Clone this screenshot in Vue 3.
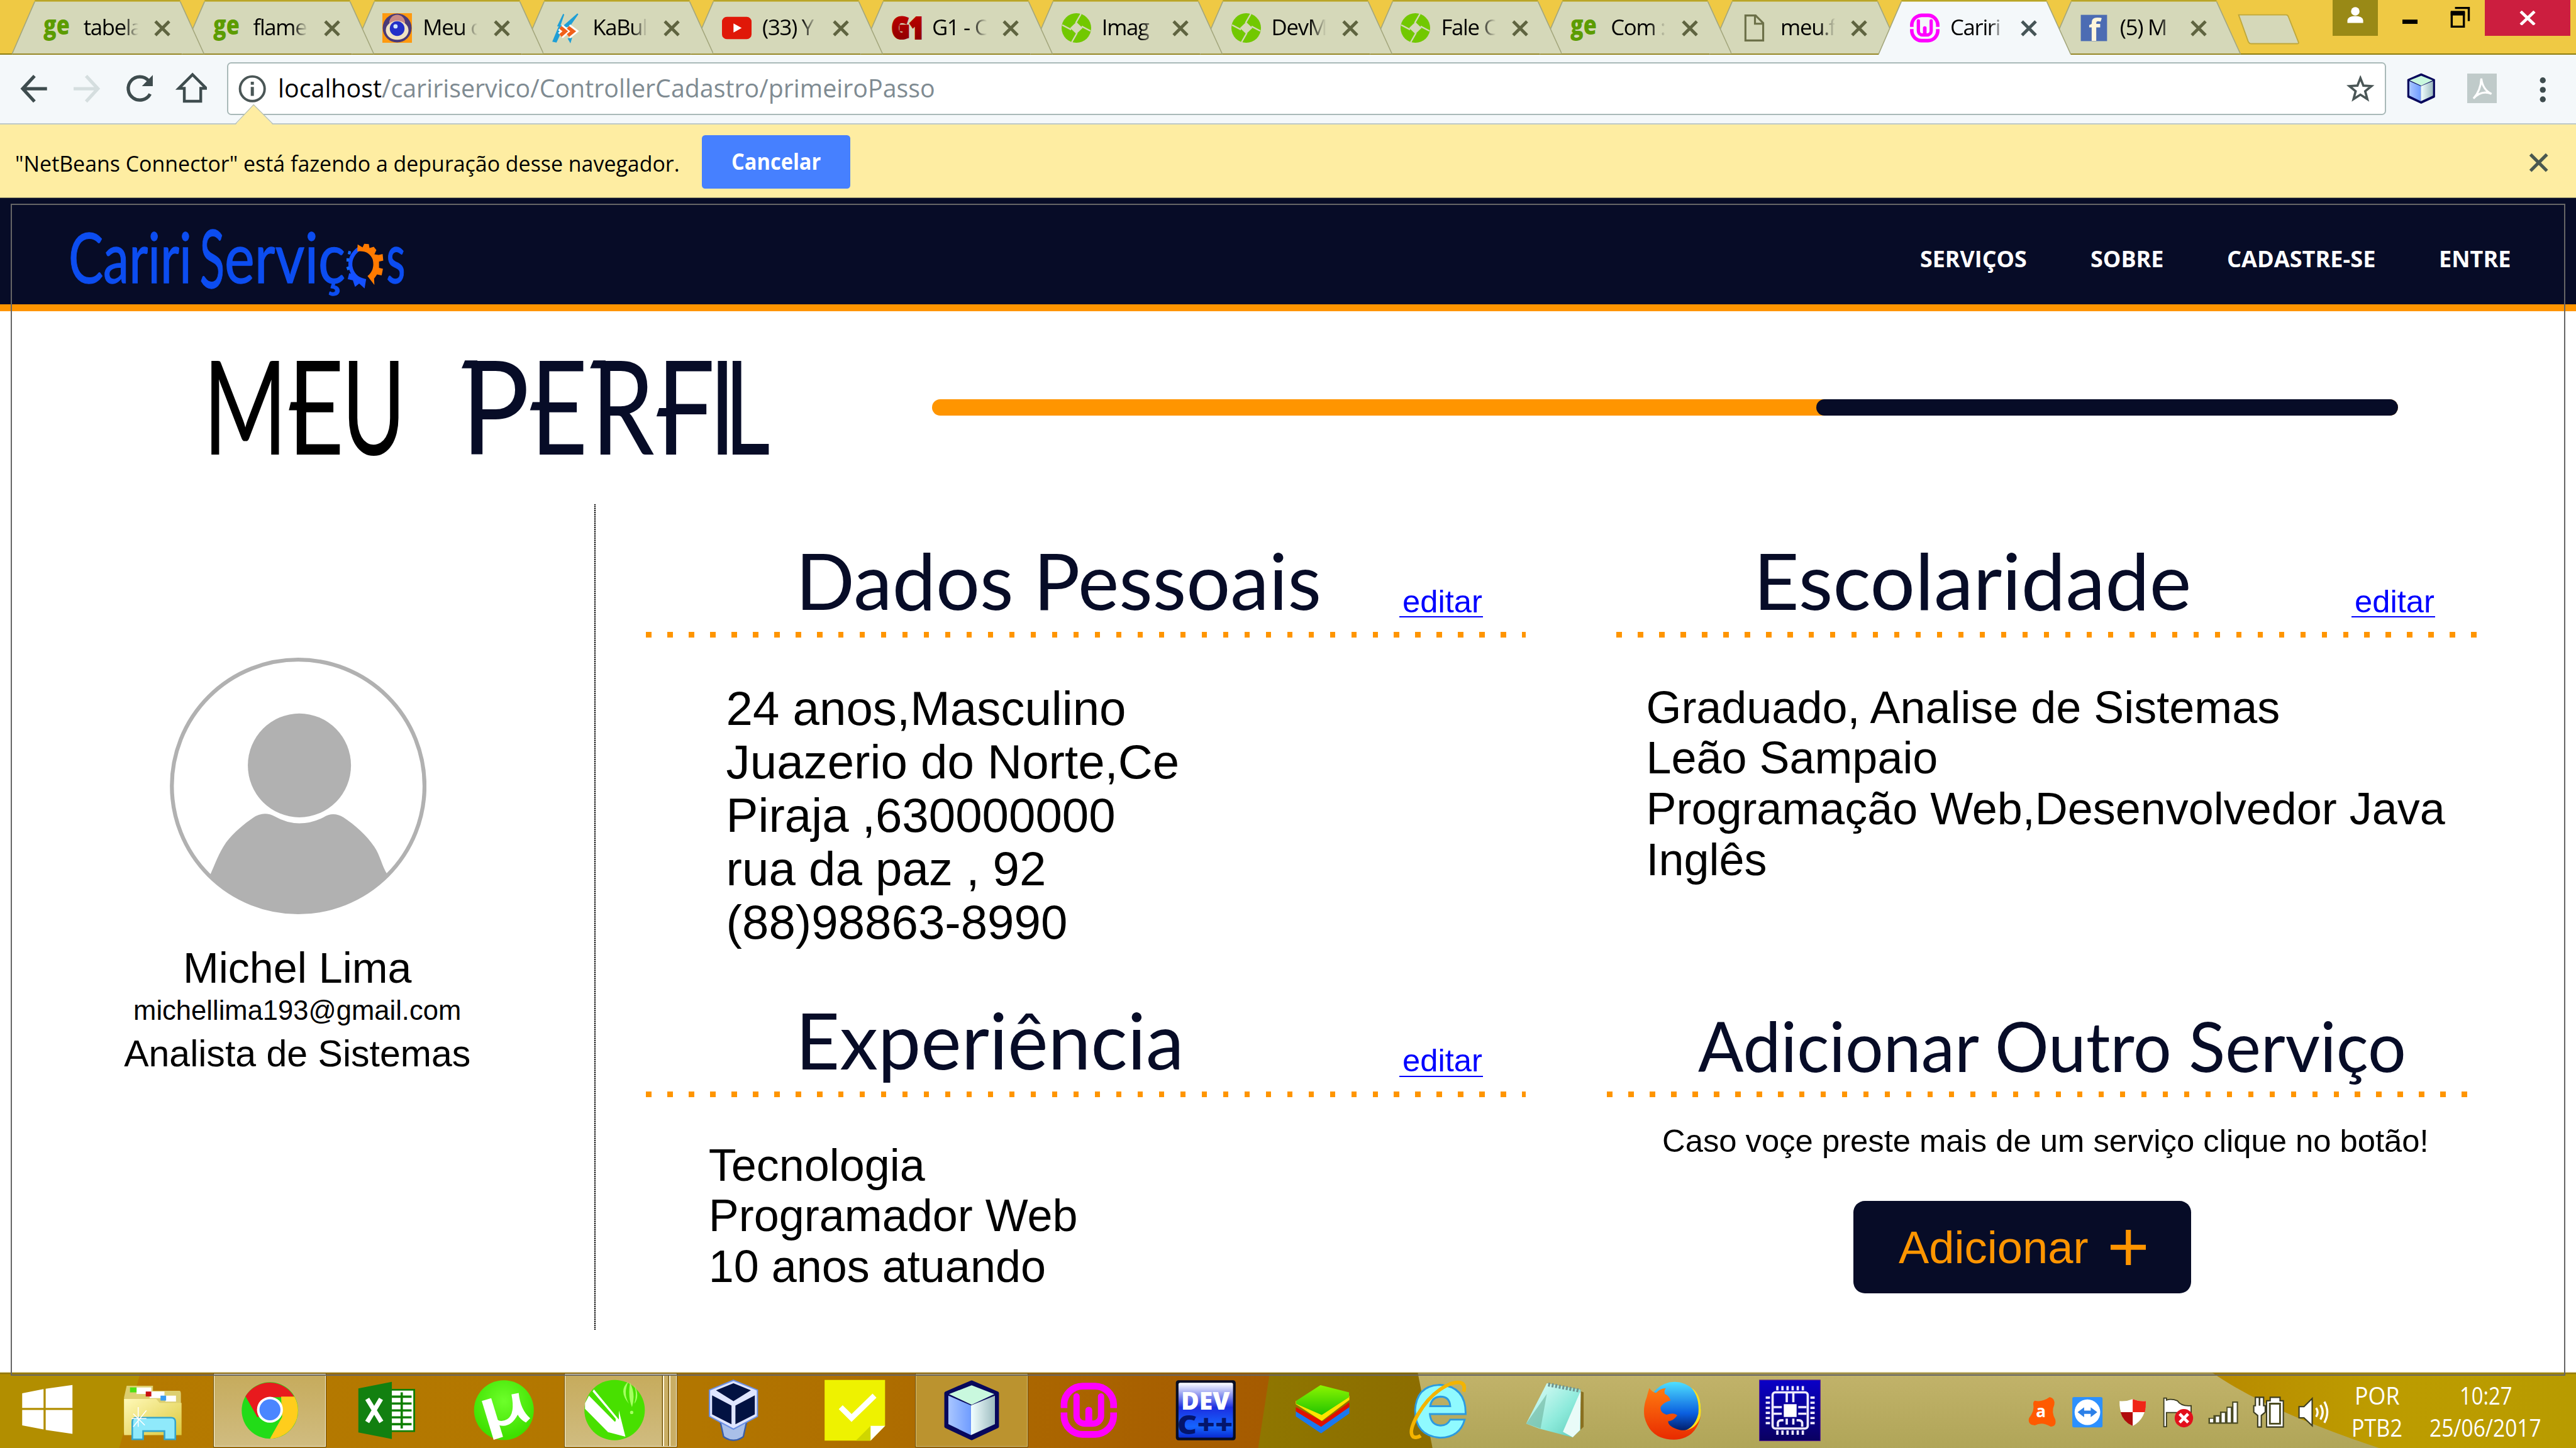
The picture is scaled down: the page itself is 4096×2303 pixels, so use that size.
<script setup>
import { h } from 'vue'

// One line of text drawn at a fixed width; all measures are tenths of a rem.
const FitText = (p) =>
  h('svg', { width: `${p.w / 10}rem`, height: `${p.h / 10}rem`, viewBox: `0 0 ${p.w} ${p.h}`, overflow: 'visible' }, [
    h('text', { x: 0, y: p.base, 'font-size': p.size, textLength: p.w, lengthAdjust: 'spacingAndGlyphs', fill: 'currentColor' }, p.text),
  ])
FitText.props = ['w', 'h', 'base', 'size', 'text']

const tabs = [
  { icon: 'ge', label: 'tabela' },
  { icon: 'ge', label: 'flame' },
  { icon: 'eye', label: 'Meu c' },
  { icon: 'kabum', label: 'KaBul' },
  { icon: 'youtube', label: '(33) Y' },
  { icon: 'g1', label: 'G1 - C' },
  { icon: 'dev', label: 'Imag' },
  { icon: 'dev', label: 'DevM' },
  { icon: 'dev', label: 'Fale C' },
  { icon: 'ge', label: 'Com :' },
  { icon: 'file', label: 'meu.f' },
  { icon: 'wamp', label: 'Cariri', active: true },
  { icon: 'facebook', label: '(5) M' },
]
const nav = [
  { text: 'SERVIÇOS', w: 65 },
  { text: 'SOBRE', w: 44.6 },
  { text: 'CADASTRE-SE', w: 90.5 },
  { text: 'ENTRE', w: 43.8 },
]
// Title letters: left edge and advance of each glyph within its word
const meu = [
  { c: 'M', x: -4.6, w: 51.2 },
  { c: 'E', x: 47, w: 34.2 },
  { c: 'U', x: 79.8, w: 38.8 },
]
const perfil = [
  { c: 'P', x: 0, w: 41.8 },
  { c: 'E', x: 42.4, w: 34.7 },
  { c: 'R', x: 79.3, w: 38.4 },
  { c: 'F', x: 119.2, w: 35.4 },
  { c: 'I', x: 151.2, w: 15.8 },
  { c: 'L', x: 160.4, w: 27.8 },
]
const dados = ['24 anos,Masculino', 'Juazerio do Norte,Ce', 'Piraja ,630000000', 'rua da paz , 92', '(88)98863-8990']
const escola = ['Graduado, Analise de Sistemas', 'Leão Sampaio', 'Programação Web,Desenvolvedor Java', 'Inglês']
const exper = ['Tecnologia', 'Programador Web', '10 anos atuando']
const pins = [0, 1, 2, 3, 4, 5]
</script>

<template>
  <div class="screen">
    <svg class="defs" width="0" height="0">
      <defs>
        <linearGradient id="cubeL" x1="0" y1="0" x2="1" y2="0"><stop offset="0" stop-color="#a9c6ff" /><stop offset="1" stop-color="#6f9cff" /></linearGradient>
        <linearGradient id="cubeR" x1="0" y1="0" x2="1" y2="0"><stop offset="0" stop-color="#f2ffff" /><stop offset="1" stop-color="#9dbcc0" /></linearGradient>
        <linearGradient id="devBg" x1="0" y1="0" x2="0" y2="1"><stop offset="0" stop-color="#fff" /><stop offset=".45" stop-color="#1c2ee0" /><stop offset=".8" stop-color="#1565ff" /><stop offset="1" stop-color="#0a2bd0" /></linearGradient>
        <linearGradient id="g1Bg" x1="0" y1="0" x2="0" y2="1"><stop offset="0" stop-color="#c80000" /><stop offset="1" stop-color="#850000" /></linearGradient>
        <linearGradient id="folder" x1="0" y1="0" x2="1" y2="1"><stop offset="0" stop-color="#fff9b8" /><stop offset="1" stop-color="#dcc83c" /></linearGradient>
        <linearGradient id="chip" x1="0" y1="0" x2="0" y2="1"><stop offset="0" stop-color="#0a00c8" /><stop offset="1" stop-color="#0a0060" /></linearGradient>
        <linearGradient id="pad" x1="0" y1="0" x2="1" y2="1"><stop offset="0" stop-color="#e8fffb" /><stop offset=".6" stop-color="#8deadb" /><stop offset="1" stop-color="#5cc9b8" /></linearGradient>
        <linearGradient id="stack" x1="0" y1="0" x2="0" y2="1"><stop offset="0" stop-color="#8cf500" /><stop offset="1" stop-color="#22c400" /></linearGradient>
        <linearGradient id="ffOrange" x1="0" y1="0" x2="0" y2="1"><stop offset="0" stop-color="#ff7a10" /><stop offset="1" stop-color="#e82a00" /></linearGradient>
        <linearGradient id="ffBlue" x1="0" y1="0" x2="0" y2="1"><stop offset="0" stop-color="#4fe0ff" /><stop offset=".6" stop-color="#0a5fe0" /><stop offset="1" stop-color="#001050" /></linearGradient>
        <radialGradient id="muBg" cx=".5" cy=".35" r=".6"><stop offset="0" stop-color="#6dff2a" /><stop offset="1" stop-color="#3fe000" /></radialGradient>
        <symbol id="wamp" viewBox="0 0 36 36">
          <path d="M2.2 16.6V14A12 12 0 0 1 14 2.6h8A12 12 0 0 1 33.8 14v2.6M2.2 19.4V22A12 12 0 0 0 14 33.4h8A12 12 0 0 0 33.8 22v-2.6" fill="none" stroke="#ff00ff" stroke-width="4.3" />
          <path d="M10.2 9.2V21.5a5 5 0 0 0 5 5h5.6a5 5 0 0 0 5-5V9.2" fill="none" stroke="#ff00ff" stroke-width="4" stroke-linecap="round" />
          <path d="M18 18v7" stroke="#ff00ff" stroke-width="4.4" stroke-linecap="round" />
        </symbol>
        <symbol id="cube" viewBox="0 0 36 38">
          <path d="M18 1.6 33.8 8.4V29L18 36.4 2.2 29V8.4Z" fill="#08085c" stroke="#08085c" stroke-width="2.2" stroke-linejoin="round" />
          <path d="M18 3.5 32 9 18 15.6 4 9Z" fill="#c9f8de" />
          <path d="M3.6 10 17.6 16V34.4L3.6 27.6Z" fill="url(#cubeL)" />
          <path d="M32.4 10 17.6 16V34.4L32.4 27.6Z" fill="url(#cubeR)" />
        </symbol>
      </defs>
    </svg>

    <!-- Browser tabs -->
    <header class="tabstrip">
      <div v-for="(t, i) in tabs" :key="i" class="tab" :class="{ active: t.active }" :style="{ zIndex: t.active ? 30 : 20 - i }">
        <svg class="tab-shape" viewBox="0 0 117 33.2" preserveAspectRatio="none">
          <path :d="t.active ? 'M0 33.3 13.9 .9H102.4L117 33.3Z' : 'M0 32.6 13.9 .9H102.4L117 32.6Z'" />
          <path class="edge" d="M0 33 13.9 .9M102.4 .9 117 33" />
          <path class="top" d="M13.9 .5H102.4" />
        </svg>
        <svg class="fav" viewBox="0 0 18 18">
          <text v-if="t.icon === 'ge'" x="0" y="13.2" font-size="16.5" font-weight="800" fill="#5c9c00" textLength="16" lengthAdjust="spacingAndGlyphs">ge</text>
          <g v-else-if="t.icon === 'eye'">
            <rect width="18" height="18" fill="#ff9a10" />
            <circle cx="9" cy="9" r="8.8" fill="#4a3a78" /><circle cx="9" cy="5.8" r="4.8" fill="#c98a86" />
            <ellipse cx="9" cy="10.4" rx="6.9" ry="5.8" fill="#efe3c4" /><circle cx="9" cy="9.4" r="4.5" fill="#2330c8" /><circle cx="8" cy="8" r="1.3" fill="#cfe6ff" />
          </g>
          <g v-else-if="t.icon === 'kabum'">
            <path d="M7 .6 3.6 7.6 7 8 15.6 .4 10.6 7.6 6.4 8.8 2.4 17.4 .6 17 5 6.5Z M10 15.6l1.6-.2-.6 2Z" fill="#1f9fd6" stroke="#1f9fd6" stroke-width=".8" />
            <path d="M5 8.6 8 11 5 13.6M9.6 8.6 12.8 11 9.6 13.6" fill="none" stroke="#fff" stroke-width="4.4" />
            <path d="M5 8.6 8 11 5 13.6M9.6 8.6 12.8 11 9.6 13.6" fill="none" stroke="#f0601a" stroke-width="2.2" />
          </g>
          <g v-else-if="t.icon === 'youtube'"><rect y="2.2" width="18" height="13.6" rx="3" fill="#e01808" /><path d="M7 6.2 12 9 7 11.8Z" fill="#fff" /></g>
          <text v-else-if="t.icon === 'g1'" x="0" y="15.4" font-size="17.6" font-weight="800" fill="url(#g1Bg)" stroke="url(#g1Bg)" stroke-width="1.5" textLength="19.4" lengthAdjust="spacingAndGlyphs">G1</text>
          <g v-else-if="t.icon === 'dev'">
            <circle cx="9" cy="9" r="9" fill="#72c800" />
            <path d="M9 5.4 12.8 9 9 12.6 5.2 9Z" fill="#d5d8b9" />
            <path d="M11.8 .4 8.6 6M17.6 10.8 12.2 8M6.2 17.6 9.4 12M.4 7.2 5.8 10" stroke="#d5d8b9" stroke-width=".9" />
          </g>
          <path v-else-if="t.icon === 'file'" d="M3.2 1.4H9.4L14 6V16.6H3.2ZM9 1.8V6.4H13.6" fill="none" stroke="#6c7048" stroke-width="1.2" />
          <use v-else-if="t.icon === 'wamp'" href="#wamp" width="18" height="18" />
          <g v-else><rect x=".6" y="1" width="16" height="16" fill="#4c6cb3" /><text x="5.4" y="17" font-size="18.5" font-weight="700" fill="#fff6dc">f</text></g>
        </svg>
        <span class="tab-label">{{ t.label }}</span>
        <svg class="tab-close" viewBox="0 0 10 10"><path d="M.8 .8 9.2 9.2M9.2 .8 .8 9.2" /></svg>
      </div>
      <svg class="newtab" viewBox="0 0 38 19"><path d="M.6 .6H29.5Q30.6 .6 31 2L37 17.2Q37.4 18.2 36.4 18.2H8.4Q7 18.2 6.4 16.8Z" fill="#d5d8b9" stroke="#bfa83a" stroke-width=".7" /></svg>
      <div class="user"><svg viewBox="0 0 10 10"><circle cx="5" cy="2.7" r="2.6" /><path d="M.2 9.8V8Q.6 5.8 5 5.6 9.4 5.8 9.8 8V9.8Z" /></svg></div>
      <svg class="winbtn" viewBox="0 0 42 14">
        <path d="M0 9.4H9.2" stroke="#000" stroke-width="2.6" />
        <path d="M30 4H37.4V12.4H30ZM32 1H40.4V9" fill="none" stroke="#000" stroke-width="1.3" /><path d="M29.4 4.2H38" stroke="#000" stroke-width="2.8" />
      </svg>
      <div class="winclose"><svg viewBox="0 0 10 9"><path d="M.8 .5 9.2 8.5M9.2 .5 .8 8.5" /></svg></div>
    </header>

    <!-- Toolbar -->
    <div class="toolbar">
      <svg class="navicons" viewBox="0 0 126 20">
        <g fill="none" stroke="#3e4c4e" stroke-width="2">
          <path d="M21 2.2 13.8 10 21 17.8M14 10H28.6" />
          <path d="M52.4 2.2 59.6 10 52.4 17.8M59.4 10H44.8" stroke="#d5dedf" />
          <path d="M91.4 13.2A7.1 7.1 0 1 1 90.4 5" />
          <path d="M112.2 17.6V9.8H108.8L117.2 1.4 125.6 9.8H122.2V17.6Z" stroke-width="1.7" />
        </g>
        <path d="M93 1.6V8.4H86.4Z" fill="#3e4c4e" />
      </svg>
      <div class="omnibox">
        <svg class="info" viewBox="0 0 17 17"><circle cx="8.5" cy="8.5" r="7.5" fill="none" stroke="#4a5656" stroke-width="1.5" /><path d="M8.5 7.4V12.8M8.5 4.2V6" stroke="#4a5656" stroke-width="1.9" /></svg>
        <svg class="url" viewBox="0 0 400 20">
          <text y="15.4" font-size="15.2" textLength="400" lengthAdjust="spacingAndGlyphs"><tspan fill="#000">localhost</tspan><tspan fill="#7f8b92">/caririservico/ControllerCadastro/primeiroPasso</tspan></text>
        </svg>
        <svg class="star" viewBox="0 0 17 16"><path d="M8.5 1.6 10.3 6.2 15.2 6.5 11.4 9.6 12.7 14.4 8.5 11.7 4.3 14.4 5.6 9.6 1.8 6.5 6.7 6.2Z" fill="none" stroke="#4a5656" stroke-width="1.4" /></svg>
      </div>
      <svg class="ext" viewBox="0 0 18.6 18.6"><use href="#cube" width="18.6" height="18.6" /></svg>
      <svg class="pdf" viewBox="0 0 18 18"><rect width="18" height="18" fill="#c0cbca" /><path d="M3.8 15.2Q8.2 10.5 8.6 3Q9.4 9.8 14.8 12.4Q8.8 9.8 3.8 15.2Z" fill="none" stroke="#fff" stroke-width="1.2" /></svg>
      <svg class="dots3" viewBox="0 0 4 16"><circle cx="2" cy="2.2" r="1.8" /><circle cx="2" cy="8" r="1.8" /><circle cx="2" cy="13.8" r="1.8" /></svg>
    </div>

    <!-- Debugger notice -->
    <div class="infobar">
      <svg class="pointer" viewBox="0 0 23 12.6"><path d="M0 12.6 11.2 0 23 12.6Z" fill="#feeda2" /><path d="M0 12 11.2 .2 23 12" fill="none" stroke="#b9c2b4" stroke-width=".5" /></svg>
      <FitText class="notice" :w="404.5" :h="44.8" :base="28.8" :size="13.4" text="&quot;NetBeans Connector&quot; está fazendo a depuração desse navegador." />
      <button class="cancel"><FitText :w="54.5" :h="32.3" :base="21.1" :size="13.6" text="Cancelar" /></button>
      <svg class="dismiss" viewBox="0 0 12 12"><path d="M1 1 11 11M11 1 1 11" /></svg>
    </div>

    <!-- Site header -->
    <div class="site-head">
      <svg class="logo" viewBox="0 0 206 46" overflow="visible">
        <text x="-.4" y="35.7" font-size="42.5" textLength="75" lengthAdjust="spacingAndGlyphs">Cariri</text>
        <text x="79.4" y="38.6" font-size="49" textLength="15.2" lengthAdjust="spacingAndGlyphs" stroke="#0c4df0" stroke-width=".9">S</text>
        <text x="94.6" y="35.7" font-size="42.5" textLength="73.6" lengthAdjust="spacingAndGlyphs">erviç</text>
        <text x="193" y="35.7" font-size="42.5" textLength="11.6" lengthAdjust="spacingAndGlyphs">s</text>
        <path d="M176.4 14.8Q170.6 19 171.2 25.4 172.4 32.6 179.4 34.2L179 36.6 176.6 34.4 174.6 36 173.6 33 171 32.4 171.6 30" fill="none" stroke="#1450ff" stroke-width="2.4" />
        <path d="M171.4 17.4l-1.6-.4M170.4 21.6l-1.6 0M170.6 26.4l-1.6.6" stroke="#1268ff" stroke-width="2" />
        <path d="M175.6 12.2 178.6 14 179.6 11.8 182.4 12 182.8 14.4 185.4 13.6 187 15.6 185.8 18.2 188.4 18.6 190.8 18 191.2 22 188.6 22.6 188.6 26.4 191 27 190.2 31 187.4 30.4 185.6 33 185.8 36.8 182.4 32.4 181.6 31.4Q186.2 27.6 184.8 21.4 182.4 15.6 175.4 16.4Z" fill="#ff7a00" />
      </svg>
      <nav>
        <FitText v-for="n in nav" :key="n.text" :w="n.w" :h="20" :base="15" :size="13.6" :text="n.text" />
      </nav>
    </div>

    <main>
      <div class="title-row">
        <svg class="meu" viewBox="0 0 114 117.6" overflow="visible">
          <text y="87.3" font-size="79.6"><tspan v-for="l in meu" :key="l.x" :x="l.x" :textLength="l.w" lengthAdjust="spacingAndGlyphs">{{ l.c }}</tspan></text>
          <path class="swash" d="M47.6 60.3 48.8 55.3H55V60.3Z" />
        </svg>
        <svg class="perfil" viewBox="0 0 187 117.6" overflow="visible">
          <text y="87.3" font-size="79.6"><tspan v-for="l in perfil" :key="l.x" :x="l.x" :textLength="l.w" lengthAdjust="spacingAndGlyphs">{{ l.c }}</tspan></text>
          <path class="swash" d="M.4 34.7 2.4 30H10V34.7ZM78.6 34.7 80.6 30H88V34.7ZM42 60.3 43.6 55.3H51V60.3ZM119 64 120.6 59H128V64Z" />
        </svg>
        <div class="progress"><div class="rest"></div></div>
      </div>
      <div class="body">
        <aside>
          <svg class="avatar" viewBox="102.9 400.6 156.3 156.3">
            <circle cx="181.05" cy="478.7" r="76.9" fill="none" stroke="#b1b1b1" stroke-width="2.4" />
            <ellipse cx="181.8" cy="466.2" rx="31.4" ry="31.6" fill="#b1b1b1" />
            <path d="M127.2 533.4C130.5 526.5 132.6 519.6 137.2 513.1 142 506.8 148.6 501.4 153.4 498.2Q160 493.6 167 497.4 174 501.4 181.7 501.5 189.6 501.4 196.4 497.8 202.3 494 208.6 497.8C215.6 502.4 222.6 508.6 227.4 515.7 231 521 232 527.4 235.2 532.4A76 77 0 0 1 127.2 533.4Z" fill="#b1b1b1" />
          </svg>
          <p class="name">Michel Lima</p>
          <p class="mail">michellima193@gmail.com</p>
          <p class="job">Analista de Sistemas</p>
        </aside>

        <div class="col left">
          <section>
            <div class="head"><FitText :w="320" :h="77.9" :base="64.2" :size="47.6" text="Dados Pessoais" /><a>editar</a></div>
            <div class="rule"></div>
            <div class="lines big"><p v-for="l in dados" :key="l">{{ l }}</p></div>
          </section>
          <section>
            <div class="head"><FitText :w="236.4" :h="77.9" :base="64.2" :size="47.6" text="Experiência" /><a>editar</a></div>
            <div class="rule"></div>
            <div class="lines exp"><p v-for="l in exper" :key="l">{{ l }}</p></div>
          </section>
        </div>

        <div class="col right">
          <section class="school">
            <div class="head"><FitText :w="266.6" :h="77.9" :base="64.2" :size="47.6" text="Escolaridade" /><a>editar</a></div>
            <div class="rule"></div>
            <div class="lines edu"><p v-for="l in escola" :key="l">{{ l }}</p></div>
          </section>
          <section>
            <div class="head add"><FitText :w="431" :h="77.9" :base="65.7" :size="42.4" text="Adicionar Outro Serviço" /></div>
            <div class="rule"></div>
            <p class="hint">Caso voçe preste mais de um serviço clique no botão!</p>
            <button class="add-btn">Adicionar<svg viewBox="0 0 21.6 21.6"><path d="M0 10.6H21.6M10.8 0V21.6" /></svg></button>
          </section>
        </div>
      </div>
    </main>

    <!-- Windows taskbar -->
    <footer class="taskbar">
      <svg class="wall" viewBox="0 0 1568 46.6" preserveAspectRatio="none">
        <defs>
          <linearGradient id="w1"><stop offset="0" stop-color="#b57a00" /><stop offset=".5" stop-color="#b27600" /><stop offset="1" stop-color="#a55a00" /></linearGradient>
          <linearGradient id="w2"><stop offset="0" stop-color="#8f7600" /><stop offset="1" stop-color="#8c6c00" /></linearGradient>
          <linearGradient id="w3" x1="0" y1="0" x2="0" y2="1"><stop offset="0" stop-color="#c2b36a" /><stop offset="1" stop-color="#b0a558" /></linearGradient>
          <linearGradient id="w4"><stop offset="0" stop-color="#b88a00" /><stop offset=".45" stop-color="#bd9c00" /><stop offset="1" stop-color="#b89b00" /></linearGradient>
        </defs>
        <rect width="1568" height="46.6" fill="#b28e00" />
        <path d="M85.6 0H780V46.6H72.5Z" fill="url(#w1)" />
        <path d="M773 0H880V46.6H765.8Z" fill="url(#w2)" />
        <path d="M862.9 0H1460V46.6H872Z" fill="url(#w3)" />
        <path d="M1346 0H1568V46.6H1449Q1380 24 1346 0Z" fill="url(#w4)" />
        <path d="M0 .25H1568" stroke="#ded6a4" stroke-width=".6" /><path d="M0 .9H1568" stroke="#5a4400" stroke-opacity=".5" stroke-width=".6" />
      </svg>
      <div class="tasks">
        <div class="task start"><svg viewBox="0 0 40 40"><path d="M4.7 9.6 17.7 7V18.5H4.7ZM19 6.8 35.3 4.5V18.5H19ZM4.7 19.7H17.7V31.6L4.7 29.1ZM19 19.7H35.3V34.3L19 31.9Z" fill="#fff" /></svg></div>
        <div class="task"><svg viewBox="0 0 40 40">
          <path d="M4 5H20V8H36Q37 8 37 10V34H2.4V12Z" fill="#ddcf70" />
          <rect x="10" y="6" width="9" height="4" fill="#fff" /><rect x="6" y="6" width="4" height="3" fill="#4fe014" />
          <rect x="18" y="8.5" width="9" height="4" fill="#fff" /><rect x="15.6" y="8.5" width="3.4" height="3" fill="#c81010" />
          <path d="M2.4 13H22L24 15.4H37.4V35H2.4Z" fill="url(#folder)" /><rect x="27.6" y="11" width="6.4" height="3.6" fill="#fff" /><rect x="24.6" y="11" width="3.4" height="3" fill="#3a9cf0" />
          <path d="M7.4 37.6V27Q7.4 24.4 10 24.4H31Q33.6 24.4 33.6 27V37.6H27V32.6H14V37.6Z" fill="#8fe9fb" stroke="#35a5cc" stroke-width="1" />
          <path d="M11 18V30M7 25H16M8 22 15 29M16 20 8 30" stroke="#fff" stroke-width=".6" />
        </svg></div>
        <div class="task"><div class="win"><svg viewBox="0 0 40 40">
          <circle cx="20" cy="20" r="17.2" fill="#22dc18" />
          <path d="M5.1 11.4 12.4 24.2 20 20V12H34.9A17.2 17.2 0 0 0 5.1 11.4Z" fill="#e81a1e" />
          <path d="M34.9 11.6A17.2 17.2 0 0 1 20 37.2L27.4 24 26.8 11.6Z" fill="#ffcd1c" />
          <circle cx="20" cy="19.6" r="7.9" fill="#fff" /><circle cx="20" cy="19.6" r="6.4" fill="#4a86ff" />
        </svg></div></div>
        <div class="task"><svg viewBox="0 0 40 40">
          <path d="M22 7.4H36.6V32.6H22Z" fill="#fff" stroke="#108000" stroke-width="1.1" /><path d="M23 11.6H35M23 15.8H35M23 20H35M23 24.2H35M23 28.4H35M29 9V31" stroke="#108000" stroke-width="1.4" />
          <path d="M2.6 6.6 23 2.6V37.4L2.6 33.4Z" fill="#128010" /><path d="M8 13 16.6 27M16.4 13 8 27" stroke="#fff" stroke-width="2.8" />
        </svg></div>
        <div class="task"><svg viewBox="0 0 40 40">
          <circle cx="20" cy="19.8" r="18.2" fill="url(#muBg)" />
          <path d="M9.4 13.4 16.6 37" stroke="#fff" stroke-width="6" /><path d="M14 24Q17.6 28 22 25.4 27 22 24.6 10.2L29 9.4Q30 19.6 36 24.8L33.4 27.4Q30 25.6 28.4 22.6 24 31 17 29Z" fill="#fff" />
        </svg></div>
        <div class="task"><div class="win stacked"><svg viewBox="0 0 40 40">
          <circle cx="20" cy="19.8" r="18.4" fill="#48e000" />
          <path d="M7.4 7.2 22.6 25.6V20L26.6 36 16 33.2 2 19V15.6L4.4 11 20 26.8Q21 27 20.6 25L6.6 8.4Z" fill="#fff" />
          <path d="M28.4 2.4Q22 8 28.8 16Q25 10 28.4 2.4ZM29.4 3Q28 12 30.6 18Q33 10 29.4 3ZM31.6 4Q35.8 11 32 16Q34 9 31.6 4Z" fill="#a6ff62" /><circle cx="30.4" cy="21.2" r="1" fill="#a6ff62" />
        </svg><i></i><i></i></div></div>
        <div class="task vbox"><svg viewBox="0 0 40 40">
          <path d="M12 27 14 36Q20 40.4 26 36L28 27Z" fill="#a9bfe8" stroke="#3a5ea8" stroke-width=".9" />
          <path d="M20 1.6 34.6 7.6V23.6L20 31.4 5.4 23.6V7.6Z" fill="#dfe5ff" stroke="#6c90e4" stroke-width=".8" />
          <path d="M20 3.4 30.6 7.8 20 14.4 9.4 7.8ZM7 10.8 18.8 17V28.4L7 22.4ZM33 10.8 21.2 17V28.4L33 22.4Z" fill="#021242" />
        </svg></div>
        <div class="task"><svg viewBox="0 0 40 40"><path d="M1.6 1.4H38.4V29.4L29.6 38.4H1.6Z" fill="#eef200" /><path d="M20.6 38.4 29.6 29.4V38.4Z" fill="#cfd600" /><path d="M29.6 29.4H38.4L29.6 38.4Z" fill="#fff" /><path d="M11.4 18 18 24.6 32 11" fill="none" stroke="#fff" stroke-width="3.4" /></svg></div>
        <div class="task"><div class="win dim"><svg viewBox="0 0 40 40"><use href="#cube" x="1.4" y="1.2" width="37" height="37.4" /></svg></div></div>
        <div class="task"><svg viewBox="0 0 40 40"><use href="#wamp" x="2.8" y="2.4" width="34.4" height="35" /></svg></div>
        <div class="task"><svg viewBox="0 0 40 40">
          <rect x="1.8" y="1.6" width="36.4" height="36.6" rx="1.6" fill="#070d24" /><rect x="3.4" y="3.2" width="33.2" height="33.4" rx="1" fill="url(#devBg)" />
          <text x="5" y="19.4" font-size="14.6" font-weight="800" fill="#fff" textLength="29.6" lengthAdjust="spacingAndGlyphs">DEV</text>
          <text x="2.6" y="34.4" font-size="16" font-weight="800" fill="#04156c" textLength="34" lengthAdjust="spacingAndGlyphs">C++</text>
        </svg></div>
        <div class="task"><svg viewBox="0 0 40 40">
          <path d="M3.6 23.6 19 34 36.2 21.8V17L20 26.6 3.6 20Z" fill="#1a78f0" /><path d="M3.6 20.6 19 30 36.2 18V15L20 26.6 3.6 18Z" fill="#e00f00" />
          <path d="M3.6 16.2 19.4 26.4 36.2 13.6V11L20 20.6 3.6 14.2Z" fill="#ffe400" /><path d="M3.8 14.2 18.6 4.6 36 9V12L19.4 22.8 3.8 16Z" fill="url(#stack)" />
        </svg></div>
        <div class="task"><svg viewBox="0 0 40 40">
          <path d="M35.8 22.2H14Q14.6 29 20.6 29.2 24.6 29.2 26.4 25.6H35.2Q32.2 36.4 20.4 36.6 5.2 35.6 5 20 5.8 4.8 20.2 4.4 36 5.4 35.8 22.2ZM14.2 17.4H26.4Q26 11.6 20.4 11.6 15.2 11.8 14.2 17.4Z" fill="#8ffaff" stroke="#2b9ae0" stroke-width="1.1" fill-rule="evenodd" />
          <path d="M34.6 8.6Q36.6 1 27 3.6 15 8.4 7 22 .6 33 3.8 36 6 37 8.4 35.4" fill="none" stroke="#f4b400" stroke-width="2.2" />
        </svg></div>
        <div class="task"><svg viewBox="0 0 40 40">
          <path d="M34 8 36.4 9V30L30 36Z" fill="#8a7020" /><path d="M14 3.4 34.6 7.4 34.4 32 29.6 36.4 9.2 31 1.4 28Z" fill="url(#pad)" /><path d="M34.6 8 23.8 33 29.8 36.4 34.2 32Z" fill="#e9fbf8" /><path d="M1.4 28 14 10 10.2 31Z" fill="#6cb39c" fill-opacity=".6" />
          <path d="M14.8 4.2 34.4 8" stroke="#6f9490" stroke-width="2.4" stroke-dasharray="1.2 1" />
        </svg></div>
        <div class="task"><svg viewBox="0 0 40 40">
          <circle cx="21" cy="18.6" r="16" fill="url(#ffBlue)" />
          <path d="M31 6Q36.4 12 35.4 22 33 32 24 33 36 37 37 20 37 10 31 6Z" fill="#ffe11a" />
          <path d="M5.6 6.4Q4.4 10 4 12 1.6 18 2.6 24 6 37.6 20.4 37.8 34 37.6 37 23 34 33 24.4 32 17 30 17 26.6 20 26.6 22.6 23 20.6 21 16 22.6 12 21.4 12.4 18 14 15.2 18.4 14 18 11.4 15 10 14.4 8 15.6 6.4 12 6.6 9.6 9.4 7 8.6 5.6 6.4Z" fill="url(#ffOrange)" />
        </svg></div>
        <div class="task"><svg viewBox="0 0 40 40">
          <rect x="1.4" y="1.5" width="37" height="37" fill="url(#chip)" stroke="#5a2090" stroke-width=".4" />
          <g fill="none" stroke="#efeaff" stroke-width="1.4"><rect x="9.4" y="9" width="21.4" height="22" rx="1.6" /><path d="M18 9.6V15M22 9.6V15M10 18H15M10 22H15M30 18H25M30 22H25M18 25V28.6M22 25V28.6M12.6 30V27.4Q13 26 15 26H16M27.4 30V27.4Q27 26 25 26H24" />
            <path v-for="p in pins" :key="p" :d="`M${12.3 + p * 3.1} 5.2V7.8M${12.3 + p * 3.1} 32.2V34.8M5.2 ${12.2 + p * 3.1}H7.8M32.4 ${12.2 + p * 3.1}H35`" />
          </g><rect x="16.2" y="16.2" width="7.8" height="7.8" fill="#fff" />
        </svg></div>
      </div>
      <div class="tray">
        <svg viewBox="0 0 20 20"><path d="M5.6 3Q10 4 14.6 .8 18 1.6 17.4 5.4 15.4 10 18 14.4 19 18.6 15.2 18.8 10 15.6 5.6 18Q1 17.6 2 13.6 5.6 9 4.6 5 4.6 3.4 5.6 3Z" fill="#ff5a00" /><text x="6.2" y="13.2" font-size="10" font-weight="700" fill="#fff">a</text></svg>
        <svg viewBox="0 0 20 20"><rect x=".8" y=".8" width="18.4" height="18.4" rx="1" fill="#2c90ff" /><circle cx="10" cy="10" r="7.8" fill="#fff" /><path d="M4 10 8 7V9H12V7L16 10 12 13V11H8V13Z" fill="#2c80e8" /></svg>
        <svg viewBox="0 0 20 20"><path d="M10 2Q6 3.6 2 3.2 1.6 14 10 18.4 18.4 14 18 3.2 14 3.6 10 2Z" fill="#fff" /><path d="M10 2Q14 3.6 18 3.2 18.2 7 17.4 10H10Z" fill="#f02418" /><path d="M10 18.4V10H2.6Q4.2 16 10 18.4Z" fill="#b00c0c" /></svg>
        <svg viewBox="0 0 20 20"><path d="M1.4 1.4V18.8H3V10.2H9Q12 12 18 10.4V6Q12 6.6 9.6 3Q6 1.6 3 2.6V1.4Z" fill="#fff" stroke="#3c3c20" stroke-width=".7" /><circle cx="13.6" cy="13.6" r="5.6" fill="#e2101c" /><path d="M11 11 16.2 16.2M16.2 11 11 16.2" stroke="#fff" stroke-width="1.8" /></svg>
        <svg viewBox="0 0 20 20"><path d="M1 13.4H4V11.8H8V9.6H12V6.6H15.4V3.4H19V17H1Z" fill="#4b4b24" /><path d="M2.9 14V16.2M6.5 12.6V16.2M10 10.4V16.2M13.6 7.4V16.2M17.2 4.2V16.2" stroke="#fff" stroke-width="2" /></svg>
        <svg viewBox="0 0 20 20"><path d="M2 .9H7V6H8V10L5.6 12V19H3.4V12L1 10V6H2Z" fill="#fff" stroke="#3c3c20" stroke-width=".8" /><path d="M4.5 1V6" stroke="#3c3c20" stroke-width="1" /><path d="M11 .9H17V3H19V19H8.8V3H11Z" fill="#fff" stroke="#3c3c20" stroke-width=".8" /><path d="M10.8 4.8H17V17H10.8Z" fill="#fff" stroke="#4c4c20" stroke-width="1.1" /></svg>
        <svg viewBox="0 0 20 20"><path d="M1 6.6H4L9 1.6V18.2L4 13.4H1Z" fill="#fff" stroke="#3c3c20" stroke-width=".8" /><path d="M11.4 7.4Q13.2 10 11.4 12.8M14 5.6Q16.8 10 14 14.4M16.4 3.6Q20 10 16.4 16.4" fill="none" stroke="#fff" stroke-width="1.3" /></svg>
      </div>
      <div class="lang"><FitText :w="27.4" :h="19.6" :base="14.6" :size="14.6" text="POR" /><FitText :w="31" :h="19.6" :base="14.6" :size="14.6" text="PTB2" /></div>
      <div class="clock"><FitText :w="32" :h="19.6" :base="14.6" :size="14.6" text="10:27" /><FitText :w="68" :h="19.6" :base="14.6" :size="14.6" text="25/06/2017" /></div>
    </footer>

    <div class="frame"></div>
  </div>
</template>

<style>
html { font-size: 26.12245px; }
body { margin: 0; overflow: hidden; background: #fff; }
</style>

<style scoped>
.screen { position: relative; width: 156.8rem; height: 88.2rem; display: flex; flex-direction: column; overflow: hidden; background: #fff; font-family: "Liberation Sans", Arial, sans-serif; color: #000; }
.defs { position: absolute; }
svg { display: block; flex: none; }
p { margin: 0; }
button { border: 0; margin: 0; padding: 0; font: inherit; }

.tabstrip { flex: none; height: 3.32rem; box-sizing: border-box; padding-left: .73rem; display: flex; background: #efc944; box-shadow: inset 0 -.08rem #8c7c10; font-family: "Open Sans", "Noto Sans", sans-serif; }
.tab { position: relative; flex: none; width: 11.7rem; height: 3.32rem; margin-right: -1.37rem; box-sizing: border-box; padding: 0 2.05rem 0 1.9rem; display: flex; align-items: center; }
.tab-shape { position: absolute; inset: 0; width: 100%; height: 100%; fill: #d5d8b9; }
.tab-shape .edge { fill: none; stroke: #a3a67c; stroke-width: .6; }
.tab-shape .top { stroke: #b9a527; stroke-width: 1; }
.tab.active .tab-shape { fill: #f4f8fa; }
.fav { position: relative; width: 1.8rem; height: 1.8rem; margin-top: .1rem; overflow: visible; }
.tab-label { position: relative; width: 3.45rem; margin-left: .65rem; font-size: 1.33rem; line-height: 3.4rem; letter-spacing: -.05rem; white-space: nowrap; overflow: hidden; -webkit-mask-image: linear-gradient(to right, #000 70%, transparent 98%); mask-image: linear-gradient(to right, #000 70%, transparent 98%); }
.tab-close { position: relative; width: 1rem; height: 1rem; margin-left: .9rem; margin-top: .1rem; stroke: #5f6440; stroke-width: 1.9; }
.active .tab-close { stroke: #465557; }
.newtab { width: 3.8rem; height: 1.9rem; margin: .84rem 0 0 1.2rem; }
.user { width: 2.74rem; height: 2.17rem; margin-left: 1.97rem; background: #998916; display: flex; justify-content: center; }
.user svg { width: 1rem; height: 1rem; margin-top: .42rem; fill: #fff; }
.winbtn { width: 4.2rem; height: 1.4rem; margin: .4rem 0 0 1.5rem; }
.winclose { width: 5.18rem; height: 2.17rem; margin-left: .84rem; background: #cc1e3f; display: flex; justify-content: center; }
.winclose svg { width: 1rem; height: .9rem; margin-top: .64rem; stroke: #fff; stroke-width: 1.8; }

.toolbar { flex: none; height: 4.25rem; box-sizing: border-box; border-bottom: .09rem solid #bdc9c9; background: #f4f8fa; display: flex; }
.navicons { width: 12.6rem; height: 2rem; margin-top: 1.08rem; }
.omnibox { width: 131.43rem; height: 3.22rem; margin: .46rem 0 0 1.22rem; box-sizing: border-box; border: .08rem solid #a9b9b8; border-radius: .25rem; background: #fff; display: flex; align-items: center; }
.info { width: 1.7rem; height: 1.7rem; margin-left: .63rem; }
.url { width: 40rem; height: 2rem; margin-left: .7rem; font-family: "Open Sans", "Noto Sans", sans-serif; }
.star { width: 1.7rem; height: 1.6rem; margin-left: auto; margin-right: .64rem; }
.ext { width: 1.9rem; height: 1.9rem; margin: 1.12rem 0 0 1.17rem; }
.pdf { width: 1.8rem; height: 1.8rem; margin: 1.17rem 0 0 1.85rem; }
.dots3 { width: .4rem; height: 1.6rem; margin: 1.34rem 0 0 2.6rem; fill: #3e4c4e; }

.infobar { position: relative; flex: none; height: 4.48rem; box-sizing: border-box; padding: 0 1.67rem 0 .92rem; border-bottom: .04rem solid #8f8a66; background: #feeda2; display: flex; font-family: "Open Sans", "Noto Sans", sans-serif; }
.pointer { position: absolute; left: 14.3rem; top: -1.23rem; width: 2.3rem; height: 1.26rem; }
.cancel { width: 9.03rem; height: 3.23rem; margin: .67rem 0 0 1.35rem; border-radius: .2rem; background: #4680ff; color: #fff; font-weight: 700; display: flex; justify-content: center; }
.dismiss { width: 1.2rem; height: 1.2rem; margin: 1.72rem 0 0 auto; stroke: #4a5850; stroke-width: 2; }

.site-head { flex: none; height: 6.89rem; box-sizing: border-box; border-bottom: .44rem solid #ff9500; background: #070c27; display: flex; justify-content: space-between; }
.logo { width: 20.6rem; height: 4.6rem; margin: 1.6rem 0 0 4.2rem; font-family: Lato, "Open Sans", sans-serif; fill: #0c4df0; }
.logo text { stroke: #0c4df0; stroke-width: .5; }
nav { display: flex; gap: 3.85rem; margin: 2.73rem 3.98rem 0 0; color: #fff; font-family: "Open Sans", "Noto Sans", sans-serif; font-weight: 700; }

main { flex: none; height: 64.6rem; }
.title-row { height: 11.76rem; display: flex; font-family: Lato, "Open Sans", sans-serif; }
.title-row svg { height: 11.76rem; fill: currentColor; }
.meu { width: 11.4rem; margin-left: 12.82rem; }
.perfil { width: 18.7rem; margin-left: 3.83rem; color: #070c27; }
.progress { width: 89.2rem; height: 1rem; margin: 5.37rem 0 0 10rem; border-radius: .5rem; background: #ff9500; display: flex; justify-content: flex-end; }
.rest { width: 35.4rem; border-radius: .5rem; background: #070c27; }

.body { display: flex; height: 52.84rem; }
aside { flex: none; width: 36.27rem; height: 50.3rem; box-sizing: border-box; padding-top: 9.36rem; text-align: center; background: repeating-linear-gradient(#000 0 2px, #fff 2px 3px) right top / 2px 100% no-repeat; }
.avatar { width: 15.63rem; height: 15.63rem; margin: 0 auto; }
.name { margin-top: 1.74rem; font-size: 2.61rem; line-height: 3rem; }
.mail { margin-top: .1rem; font-size: 1.668rem; line-height: 2rem; }
.job { margin-top: .26rem; font-size: 2.26rem; line-height: 2.8rem; }
.name, .mail, .job { position: relative; left: -.04rem; }

.left { width: 53.57rem; margin-left: 3.04rem; }
.right { width: 52.53rem; margin-left: 4.93rem; }
section { height: 27.97rem; }
.school { margin-left: .58rem; width: 52.45rem; }
.head { height: 7.79rem; box-sizing: border-box; padding: 0 2.6rem 0 9.1rem; display: flex; justify-content: space-between; color: #070c27; font-family: Lato, "Open Sans", sans-serif; }
.school .head { padding-left: 8.35rem; }
.head.add { padding: 0 0 0 5.55rem; }
.head a { height: 2.02rem; margin-top: 4.81rem; padding: 0 .06rem 0 .2rem; border-bottom: .08rem solid #00f; color: #00f; font-family: "Liberation Sans", Arial, sans-serif; font-size: 1.94rem; line-height: 2.2rem; }
.rule { height: .33rem; background: repeating-linear-gradient(to right, #ff9500 0 .33rem, transparent .33rem 1.301rem); }
.big { padding: 2.67rem 0 0 4.89rem; font-size: 2.92rem; line-height: 3.26rem; }
.exp { padding: 2.6rem 0 0 3.82rem; font-size: 2.756rem; line-height: 3.09rem; }
.edu { padding: 2.7rem 0 0 1.81rem; font-size: 2.754rem; line-height: 3.09rem; white-space: nowrap; }
.hint { padding: 1.49rem 0 0 3.37rem; font-size: 1.943rem; line-height: 2.4rem; white-space: nowrap; }
.add-btn { width: 20.53rem; height: 5.63rem; margin: 2.43rem 0 0 15.02rem; box-sizing: border-box; padding: .04rem 0 0 2.74rem; border-radius: .7rem; background: #070c27; color: #ff9500; font-size: 2.77rem; line-height: 5.6rem; display: flex; align-items: center; }
.add-btn svg { width: 2.16rem; height: 2.16rem; margin-left: 1.35rem; stroke: #ff9500; stroke-width: 3.1; }

.taskbar { position: relative; flex: none; height: 4.66rem; display: flex; align-items: center; font-family: "Open Sans", "Noto Sans", sans-serif; color: #fff; }
.wall { position: absolute; inset: 0; width: 100%; height: 100%; }
.tasks { position: relative; display: flex; }
.task { width: 7.12rem; height: 4.66rem; display: flex; align-items: center; justify-content: center; }
.task svg { width: 4rem; height: 4rem; }
.start { width: 5.74rem; }
.vbox svg { margin-right: .52rem; }
.win { width: 6.8rem; height: 4.42rem; box-sizing: border-box; border: .07rem solid #fff6d8; outline: .05rem solid #6b4c00; background: linear-gradient(#c6ab5c, #d0bc80); display: flex; align-items: center; justify-content: center; }
.dim { background: #bb932f; border-color: #dcc27a; }
.stacked { justify-content: flex-end; }
.stacked svg { margin-right: .95rem; }
.stacked i { width: .4rem; height: 100%; box-sizing: border-box; border-left: .09rem solid #fff6d8; box-shadow: -.05rem 0 #6b4c00; background: #c9ae64; }
.tray { position: relative; display: flex; margin-left: 10.38rem; margin-top: .2rem; }
.tray svg { width: 2rem; height: 2rem; margin: 0 .38rem; }
.lang, .clock { position: relative; display: flex; flex-direction: column; align-items: center; margin-top: .32rem; }
.lang { width: 3.1rem; margin-left: .92rem; }
.clock { width: 6.8rem; margin-left: 1.65rem; }

.frame { position: absolute; z-index: 40; left: .65rem; top: 12.42rem; width: 155.5rem; height: 71.35rem; box-sizing: border-box; border: .08rem solid #666; pointer-events: none; }
</style>
